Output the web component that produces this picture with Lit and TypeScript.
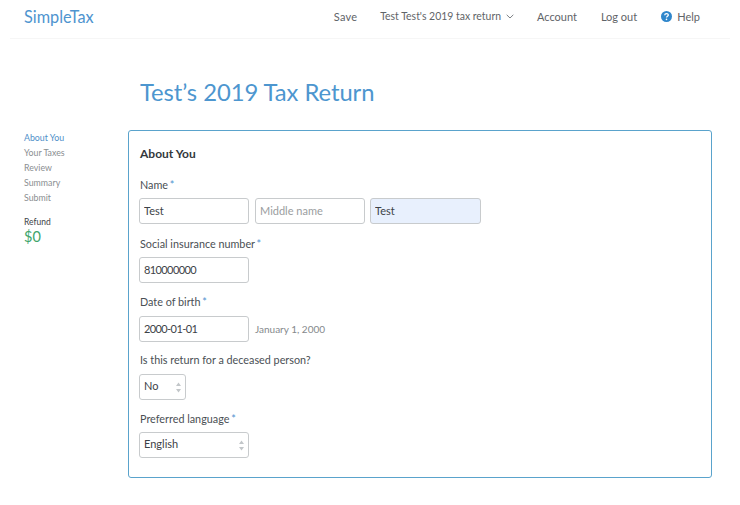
import { LitElement, html, css } from "lit";
import { customElement } from "lit/decorators.js";

const chevrons = html`<svg class="updown" width="7" height="11" viewBox="0 0 7 11"><path d="M3.5 0.5 L6 4 H1 Z M3.5 10.5 L6 7 H1 Z" fill="#c2c6c9"/></svg>`;

@customElement("app-root")
export class AppRoot extends LitElement {
  static styles = css`
    :host { display: block; width: 740px; height: 505px; background: #fff; font-family: "Lato", "Open Sans", sans-serif; color: #4a4f54; overflow: hidden; }
    * { box-sizing: border-box; }
    header { display: flex; align-items: center; height: 39px; margin: 0 10px; padding: 0 30px 6px 14px; border-bottom: 1px solid #f6f6f6; }
    .logo { font-size: 16.3px; color: #4f94cf; flex: 1; }
    nav { display: flex; align-items: center; font-size: 11px; color: #5f6468; }
    nav span { display: inline-flex; align-items: center; }
    .save { margin-right: 23px; letter-spacing: 0.2px; }
    .ret { margin-right: 23px; gap: 5px; font-size: 10.45px; }
    .acct { margin-right: 24px; letter-spacing: -0.02px; }
    .out { margin-right: 24px; }
    .help { gap: 5px; }
    .title { margin: 38px 0 0 140px; font-size: 23.8px; line-height: 30px; font-weight: 400; letter-spacing: -0.05px; color: #4d96cf; }
    .body { display: flex; margin-top: 23px; padding-left: 24px; }
    aside { width: 104px; font-size: 8.8px; }
    aside .item { height: 15px; line-height: 15px; color: #8a8e91; }
    aside .item.active { color: #4f8fc9; }
    .refund { margin-top: 10px; line-height: 14px; font-size: 8.5px; color: #3d4247; }
    .amount { font-size: 14.5px; line-height: 16px; color: #3fa56c; }
    .card { width: 584px; height: 348px; border: 1px solid #5aa3cc; border-radius: 3px; padding: 16px 10px 0; }
    h2 { margin: 0 0 17px 1px; font-size: 12px; line-height: 14px; font-weight: 700; color: #33383c; }
    .field { margin-bottom: 13px; }
    .field.tight { margin-bottom: 12px; }
    label { display: block; height: 14px; line-height: 14px; margin: 0 0 6px 1px; font-size: 10.8px; color: #4a4f54; }
    .up { margin-top: -1px; margin-bottom: 7px; }
    label b { color: #4f94cf; font-weight: 400; margin-left: -1px; }
    .row { display: flex; align-items: center; gap: 6px; }
    input, .select { height: 26px; border: 1px solid #c8cbcd; border-radius: 3px; font: inherit; font-size: 11px; color: #3d4247; padding: 0 4px 2px; background: #fff; outline: none; }
    input { width: 110px; }
    input.auto { width: 111px; background: #e8f0fd; margin-left: -1px; }
    input.num { letter-spacing: -0.6px; }
    input::placeholder { color: #9a9da0; opacity: 1; }
    .hint { font-size: 10px; color: #85898c; }
    .select { display: flex; align-items: center; justify-content: space-between; padding: 0 3px 3px 4px; }
    .no { width: 47px; }
    .lang { width: 110px; }
    .updown { margin-top: 3px; }
  `;

  render() {
    return html`
      <header>
        <div class="logo">SimpleTax</div>
        <nav>
          <span class="save">Save</span>
          <span class="ret">Test Test's 2019 tax return
            <svg width="8" height="5" viewBox="0 0 8 5"><path d="M0.7 0.8 L4 4 L7.3 0.8" fill="none" stroke="#7d8185" stroke-width="1"/></svg>
          </span>
          <span class="acct">Account</span>
          <span class="out">Log out</span>
          <span class="help">
            <svg width="11" height="11" viewBox="0 0 11 11"><circle cx="5.5" cy="5.5" r="5.5" fill="#2f86cb"/><path d="M3.7 4.2 C3.8 2 7.4 2.1 7.3 4.1 C7.3 5.3 5.5 5.3 5.5 6.6" fill="none" stroke="#fff" stroke-width="1.3"/><circle cx="5.5" cy="8.4" r="0.8" fill="#fff"/></svg>
            Help
          </span>
        </nav>
      </header>
      <h1 class="title">Test’s 2019 Tax Return</h1>
      <div class="body">
        <aside>
          <div class="item active">About You</div>
          <div class="item">Your Taxes</div>
          <div class="item">Review</div>
          <div class="item">Summary</div>
          <div class="item">Submit</div>
          <div class="refund">Refund</div>
          <div class="amount">$0</div>
        </aside>
        <section class="card">
          <h2>About You</h2>
          <div class="field">
            <label>Name <b>*</b></label>
            <div class="row">
              <input value="Test" />
              <input placeholder="Middle name" />
              <input class="auto" value="Test" />
            </div>
          </div>
          <div class="field">
            <label>Social insurance number <b>*</b></label>
            <input class="num" value="810000000" />
          </div>
          <div class="field tight">
            <label class="up">Date of birth <b>*</b></label>
            <div class="row"><input class="num" value="2000-01-01" /><span class="hint">January 1, 2000</span></div>
          </div>
          <div class="field tight">
            <label class="up">Is this return for a deceased person?</label>
            <div class="select no"><span>No</span>${chevrons}</div>
          </div>
          <div class="field">
            <label>Preferred language <b>*</b></label>
            <div class="select lang"><span>English</span>${chevrons}</div>
          </div>
        </section>
      </div>
    `;
  }
}
